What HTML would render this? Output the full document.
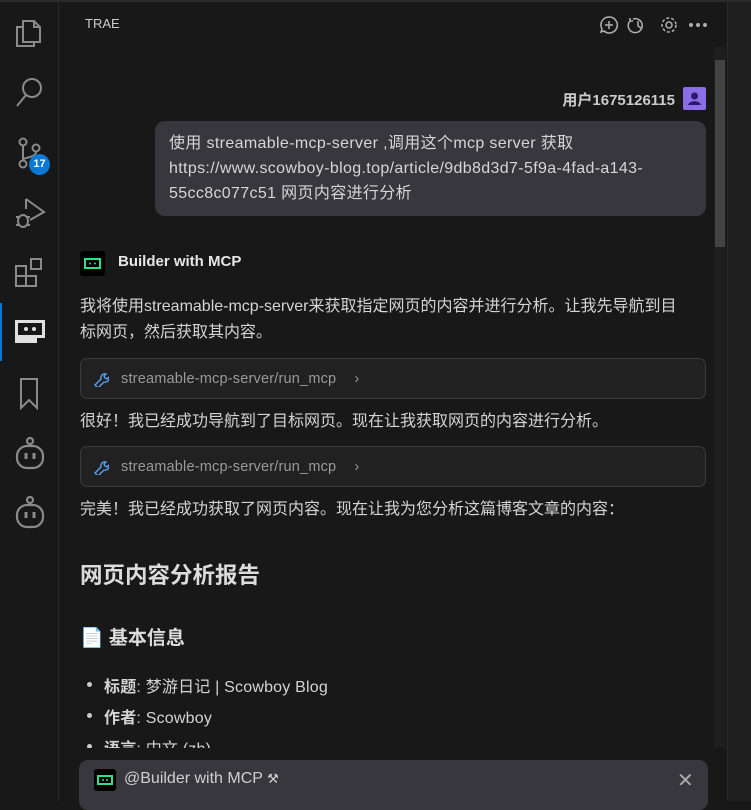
<!DOCTYPE html>
<html><head><meta charset="utf-8"><style>
*{box-sizing:border-box;margin:0;padding:0}
body{width:751px;height:801px;background:#181818;font-family:"Liberation Sans","Noto Sans CJK SC",sans-serif;color:#d4d4d4;position:relative;overflow:hidden}
.topline{position:absolute;left:0;top:0;width:751px;height:2px;background:#2b2b2b}
.act{position:absolute;left:0;top:2px;width:59px;height:799px;background:#181818;border-right:1px solid #2b2b2b}
.act svg{position:absolute;left:14px}
.badge{position:absolute;left:29px;top:152px;width:21px;height:21px;border-radius:50%;background:#0a78d4;color:#fff;font-size:11px;font-weight:bold;text-align:center;line-height:21px}
.sel{position:absolute;left:0;top:303px;width:2px;height:58px;background:#0a78d4}
.abs{position:absolute}
.title{left:85px;top:16px;font-size:13px;color:#cccccc}
.scroll{left:714px;top:47px;width:12px;height:700px;background:#1e1e1e}
.thumb{left:715px;top:60px;width:10px;height:187px;background:#434343}
.right{left:727px;top:2px;width:24px;height:799px;background:#1f1f1f;border-left:1px solid #2b2b2b}
.user{right:76px;top:89px;font-size:15px;font-weight:bold;color:#cccccc}
.ava{left:683px;top:87px;width:23px;height:23px;background:#8b6ee6;border-radius:2px}
.bubble{left:155px;top:121px;width:551px;height:95px;background:#38373d;border-radius:10px;padding:10px 14px;font-size:16px;line-height:25px;color:#d6d6d6;letter-spacing:0.35px}
.bot{left:80px;top:251px;width:25px;height:25px;background:#000;border-radius:3px}
.botname{left:118px;top:253px;font-size:15px;font-weight:bold;color:#e6e6e6}
.p{left:80px;font-size:16px;line-height:26px;color:#d4d4d4;width:640px;white-space:nowrap}
.tool{left:80px;width:626px;height:41px;background:#212121;border:1px solid #3b3b3b;border-radius:7px;font-size:14.5px;color:#9a9a9a;padding:0 0 0 40px;line-height:40px;letter-spacing:0.2px}
.tool svg{position:absolute;left:12px;top:12px}
h1{position:absolute;left:80px;top:558px;font-size:22.5px;color:#dcdcdc}
h2{position:absolute;left:80px;top:623px;font-size:19px;color:#dcdcdc}
ul{position:absolute;left:104px;top:673px;font-size:16px;list-style:none}
li{height:31px;position:relative;color:#d4d4d4;letter-spacing:0.2px}
li:before{content:"";position:absolute;left:-17px;top:9px;width:5px;height:5px;border-radius:50%;background:#ccc}
.input{left:79px;top:760px;width:629px;height:50px;background:#38373d;border-radius:9px}
</style></head><body>
<div class="topline"></div>
<div class="act">
<svg style="top:14px" width="30" height="34" viewBox="0 0 30 34" fill="none" stroke="#8a8a8a" stroke-width="2"><path d="M9 5h11l6 6v15H9z"/><path d="M20 5v6h6"/><path d="M9 11H3v19h17v-4"/></svg>
<svg style="top:73px" width="32" height="36" viewBox="0 0 32 36" fill="none" stroke="#8a8a8a" stroke-width="2"><circle cx="18" cy="13" r="9"/><path d="M12 20L3 31"/></svg>
<svg style="top:134px" width="30" height="34" viewBox="0 0 30 34" fill="none" stroke="#8a8a8a" stroke-width="2"><circle cx="9" cy="6" r="3.5"/><circle cx="9" cy="28" r="3.5"/><circle cx="22" cy="12" r="3.5"/><path d="M9 10v14M22 16c0 6-13 5-13 8"/></svg>
<div class="badge">17</div>
<svg style="top:194px" width="32" height="34" viewBox="0 0 32 34" fill="none" stroke="#8a8a8a" stroke-width="2"><path d="M12 3v10M12 3l18 13-14 8"/><ellipse cx="9" cy="25" rx="5" ry="6"/><path d="M2 21h4M2 29h4M12 21h4M12 29h4"/></svg>
<svg style="top:255px" width="32" height="34" viewBox="0 0 32 34" fill="none" stroke="#8a8a8a" stroke-width="2"><rect x="2" y="9" width="10" height="10"/><rect x="2" y="19" width="10" height="10"/><rect x="12" y="19" width="10" height="10"/><rect x="17" y="2" width="10" height="10"/></svg>
<svg style="top:316px" width="32" height="30" viewBox="0 0 32 30"><rect x="1" y="2" width="30" height="18" fill="#e0e0e0"/><rect x="4" y="5" width="24" height="12" fill="#181818"/><rect x="1" y="20" width="22" height="5" fill="#e0e0e0"/><circle cx="12" cy="11" r="2" fill="#e0e0e0"/><circle cx="20" cy="11" r="2" fill="#e0e0e0"/></svg>
<svg style="top:374px" width="30" height="34" viewBox="0 0 30 34" fill="none" stroke="#8a8a8a" stroke-width="2"><path d="M7 3h16v29l-8-8-8 8z"/></svg>
<svg style="top:434px" width="32" height="36" viewBox="0 0 32 36" fill="none" stroke="#8a8a8a" stroke-width="2.2"><circle cx="16" cy="5" r="3"/><rect x="3" y="10" width="26" height="22" rx="10"/><path d="M12 17v6M20 17v6" stroke-width="3"/></svg>
<svg style="top:493px" width="32" height="36" viewBox="0 0 32 36" fill="none" stroke="#8a8a8a" stroke-width="2.2"><circle cx="16" cy="5" r="3"/><rect x="3" y="10" width="26" height="22" rx="10"/><path d="M12 17v6M20 17v6" stroke-width="3"/></svg>
</div>
<div class="sel"></div>
<div class="abs title">TRAE</div>
<svg class="abs" style="left:599px;top:15px" width="120" height="20" viewBox="0 0 120 20" fill="none" stroke="#b0b0b0" stroke-width="1.5">
<path d="M10 2a8 8 0 1 1-5 14l-3 1 1-3A8 8 0 0 1 10 2z"/><path d="M10 6v8M6 10h8"/>
<path d="M34 4a7 7 0 1 1-3 2M31 3v3h3M39 6v5l3 2"/>
<circle cx="70" cy="10" r="3"/><circle cx="70" cy="10" r="7" stroke-dasharray="3 2"/>
<circle cx="92" cy="10" r="1.2" fill="#b0b0b0"/><circle cx="99" cy="10" r="1.2" fill="#b0b0b0"/><circle cx="106" cy="10" r="1.2" fill="#b0b0b0"/>
</svg>
<div class="abs scroll"></div><div class="abs thumb"></div>
<div class="abs right"></div>
<div class="abs user">用户1675126115</div>
<div class="abs ava"><svg width="23" height="23" viewBox="0 0 23 23"><circle cx="11.5" cy="9" r="3.5" fill="#2a1a6a"/><path d="M5 18c1-5 12-5 13 0z" fill="#2a1a6a"/></svg></div>
<div class="abs bubble">使用 streamable-mcp-server ,调用这个mcp server 获取<br>https://www.scowboy-blog.top/article/9db8d3d7-5f9a-4fad-a143-<br>55cc8c077c51 网页内容进行分析</div>
<div class="abs bot"><svg width="25" height="25" viewBox="0 0 25 25"><rect x="5" y="8" width="15" height="9" fill="none" stroke="#2ee08a" stroke-width="2"/><circle cx="10" cy="12.5" r="1" fill="#2ee08a"/><circle cx="15" cy="12.5" r="1" fill="#2ee08a"/></svg></div>
<div class="abs botname">Builder with MCP</div>
<div class="abs p" style="top:294px">我将使用streamable-mcp-server来获取指定网页的内容并进行分析。让我先导航到目<br>标网页，然后获取其内容。</div>
<div class="abs tool" style="top:358px"><svg width="16" height="16" viewBox="0 0 16 16" fill="none" stroke="#5aa0f0" stroke-width="1.4"><path d="M2 14l6-6a4 4 0 0 1 5-5l-2 2 1 2 2 1 2-2a4 4 0 0 1-5 5l-6 6z"/></svg>streamable-mcp-server/run_mcp<span style="margin-left:18px">›</span></div>
<div class="abs p" style="top:409px">很好！我已经成功导航到了目标网页。现在让我获取网页的内容进行分析。</div>
<div class="abs tool" style="top:446px"><svg width="16" height="16" viewBox="0 0 16 16" fill="none" stroke="#5aa0f0" stroke-width="1.4"><path d="M2 14l6-6a4 4 0 0 1 5-5l-2 2 1 2 2 1 2-2a4 4 0 0 1-5 5l-6 6z"/></svg>streamable-mcp-server/run_mcp<span style="margin-left:18px">›</span></div>
<div class="abs p" style="top:497px">完美！我已经成功获取了网页内容。现在让我为您分析这篇博客文章的内容：</div>
<h1>网页内容分析报告</h1>
<h2>📄 基本信息</h2>
<ul><li><b>标题</b>: 梦游日记 | Scowboy Blog</li><li><b>作者</b>: Scowboy</li><li><b>语言</b>: 中文 (zh)</li></ul>
<div class="abs" style="left:60px;top:748px;width:654px;height:12px;background:#181818"></div>
<div class="abs input">
<div class="abs" style="left:15px;top:9px;width:22px;height:22px;background:#000;border-radius:3px"><svg width="22" height="22" viewBox="0 0 22 22"><rect x="4" y="7" width="14" height="8" fill="none" stroke="#2ee08a" stroke-width="2"/><circle cx="9" cy="11" r="1" fill="#2ee08a"/><circle cx="13" cy="11" r="1" fill="#2ee08a"/></svg></div>
<div class="abs" style="left:45px;top:10px;font-size:16px;color:#d0d0d0">@Builder with MCP <span style="font-size:13px">⚒</span></div>
<div class="abs" style="left:598px;top:8px;font-size:20px;color:#aaa">✕</div>
</div>
</body></html>
